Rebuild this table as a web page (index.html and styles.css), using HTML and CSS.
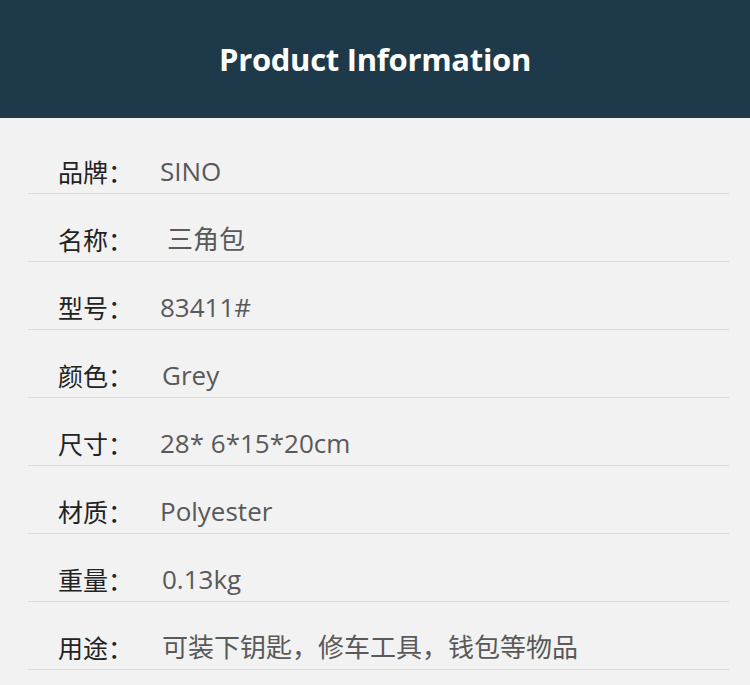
FILE: index.html
```html
<!DOCTYPE html>
<html lang="zh-CN">
<head>
    <meta charset="UTF-8">
    <meta name="viewport" content="width=device-width, initial-scale=1.0">
    <title>Product Information</title>
    <link rel="stylesheet" href="styles.css">
</head>
<body>
    <!-- Header -->
    <header class="banner">
        <h1 class="banner-title">Product Information</h1>
    </header>

    <!-- Spec List -->
    <ul class="spec-list">
        <li class="spec-row"><span class="spec-label">品牌：</span><span class="spec-value">SINO</span></li>
        <li class="spec-row"><span class="spec-label">名称：</span><span class="spec-value indent">三角包</span></li>
        <li class="spec-row"><span class="spec-label">型号：</span><span class="spec-value">83411#</span></li>
        <li class="spec-row"><span class="spec-label">颜色：</span><span class="spec-value nudge">Grey</span></li>
        <li class="spec-row"><span class="spec-label">尺寸：</span><span class="spec-value">28* 6*15*20cm</span></li>
        <li class="spec-row"><span class="spec-label">材质：</span><span class="spec-value">Polyester</span></li>
        <li class="spec-row"><span class="spec-label">重量：</span><span class="spec-value nudge">0.13kg</span></li>
        <li class="spec-row"><span class="spec-label">用途：</span><span class="spec-value nudge">可装下钥匙，修车工具，钱包等物品</span></li>
    </ul>
</body>
</html>
```

FILE: styles.css
```css
/* Global Styles */
body, html {
    margin: 0;
    padding: 0;
    width: 100%;
    height: 100%;
    overflow: hidden;
    background-color: #f2f2f2;
    font-family: "Open Sans", "Noto Sans CJK SC", sans-serif;
}

/* Header */
.banner {
    height: 118px;
    background-color: #1e3a4a;
    display: flex;
    justify-content: center;
    align-items: center;
}

.banner-title {
    margin: 0;
    color: #ffffff;
    font-size: 31px;
    font-weight: bold;
    letter-spacing: -0.3px;
}

/* Spec List */
.spec-list {
    list-style: none;
    margin: 0 21px 0 28px;
    padding: 8px 0 0;
}

.spec-row {
    height: 67px;
    display: flex;
    align-items: flex-end;
    padding-left: 30px;
    border-bottom: 1px solid #dadada;
}

.spec-label {
    width: 102px;
    color: #222222;
    font-family: "Noto Sans CJK SC", sans-serif;
    font-size: 25px;
    line-height: 36px;
    margin-bottom: 4px;
}

.spec-value {
    color: #595959;
    font-size: 26px;
    line-height: 36px;
    margin-bottom: 4px;
}

.spec-value.indent {
    padding-left: 7px;
}

.spec-value.nudge {
    padding-left: 2px;
}
```
